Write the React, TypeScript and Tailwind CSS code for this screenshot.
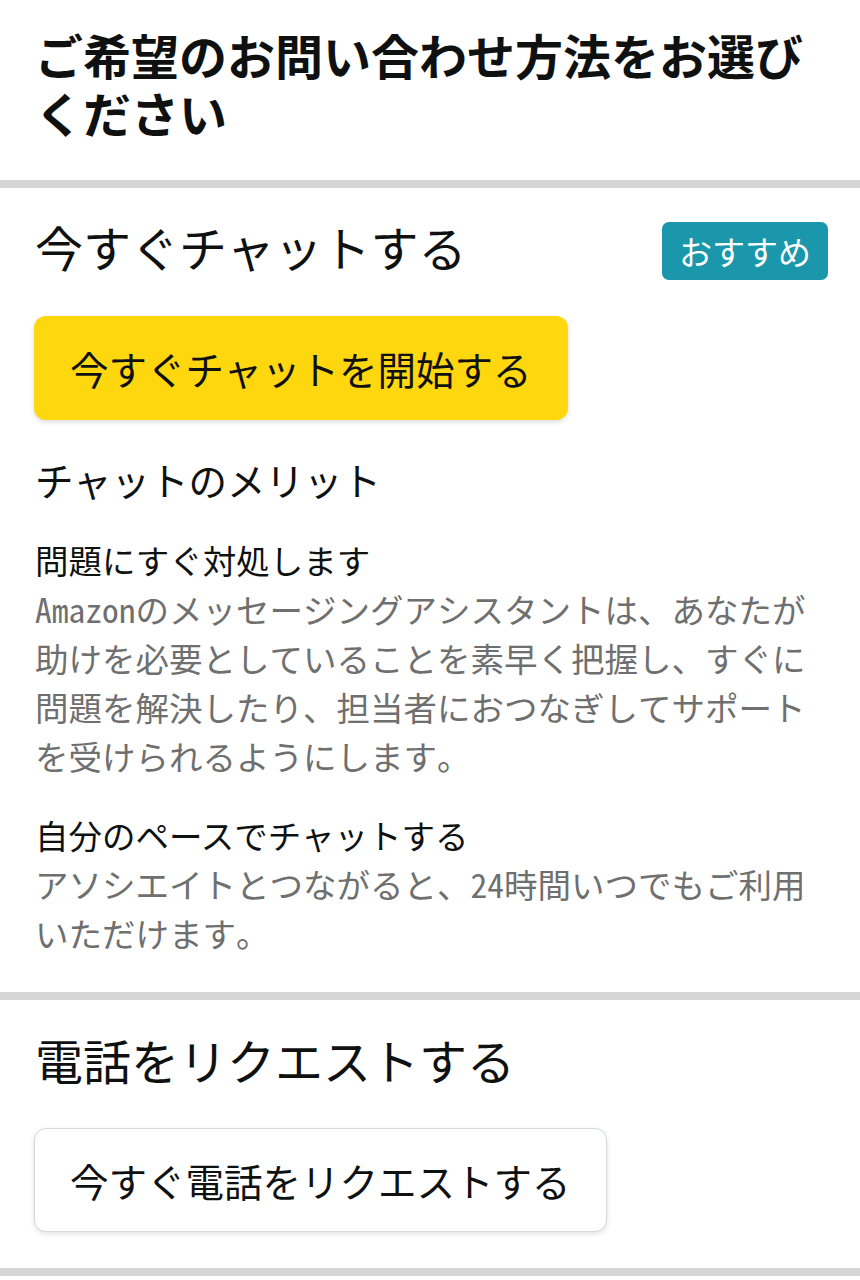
import React from "react";

const jp = { fontFamily: '"Noto Sans CJK JP", "Noto Sans", sans-serif' };
const para = { fontFamily: '"Noto Sans Mono CJK JP", "Noto Sans CJK JP", sans-serif' };

export default function App() {
  return (
    <div className="w-[860px] min-h-[1280px] bg-white text-[#0f1111]" style={jp}>
      <div className="px-[35px] pt-[25px] pb-[39px]">
        <h1 className="text-[48px] leading-[58px] font-bold">ご希望のお問い合わせ方法をお選びください</h1>
      </div>
      <div className="h-[8px] bg-[#d5d5d5]" />

      <section className="px-[35px] pt-[34px] pb-[35px]">
        <div className="flex items-start justify-between">
          <h2 className="text-[48px] leading-[48px] font-normal">今すぐチャットする</h2>
          <span className="h-[58px] flex items-center px-[17px] rounded-[7px] bg-[#1a97aa] text-white text-[33px] leading-none mr-[-3px]">おすすめ</span>
        </div>
        <button className="mt-[36px] h-[104px] px-[36px] rounded-[12px] bg-[#fed70f] text-[38.5px] leading-none text-[#0f1111] shadow-[0_2px_5px_rgba(15,17,17,0.15)] ml-[-1px]">
          今すぐチャットを開始する
        </button>
        <h3 className="mt-[34px] text-[38.5px] leading-[50px]">チャットのメリット</h3>
        <div className="mt-[31px]">
          <p className="text-[33.5px] leading-[49px]">問題にすぐ対処します</p>
          <p className="text-[33.5px] leading-[49px] text-[#6f6f6f]" style={para}>
            Amazonのメッセージングアシスタントは、あなたが助けを必要としていることを素早く把握し、すぐに問題を解決したり、担当者におつなぎしてサポートを受けられるようにします。
          </p>
        </div>
        <div className="mt-[30px]">
          <p className="text-[33.5px] leading-[49px]">自分のペースでチャットする</p>
          <p className="text-[33.5px] leading-[49px] text-[#6f6f6f]" style={para}>
            アソシエイトとつながると、24時間いつでもご利用いただけます。
          </p>
        </div>
      </section>
      <div className="h-[8px] bg-[#d5d5d5]" />

      <section className="px-[35px] pt-[30px] pb-[36px]">
        <h2 className="text-[48px] leading-[58px] font-normal">電話をリクエストする</h2>
        <button className="mt-[40px] h-[104px] px-[35px] rounded-[12px] bg-white border border-[#d5d9d9] text-[38.5px] leading-none text-[#0f1111] shadow-[0_2px_5px_rgba(15,17,17,0.12)] ml-[-1px]">
          今すぐ電話をリクエストする
        </button>
      </section>
      <div className="h-[8px] bg-[#d5d5d5]" />
    </div>
  );
}
